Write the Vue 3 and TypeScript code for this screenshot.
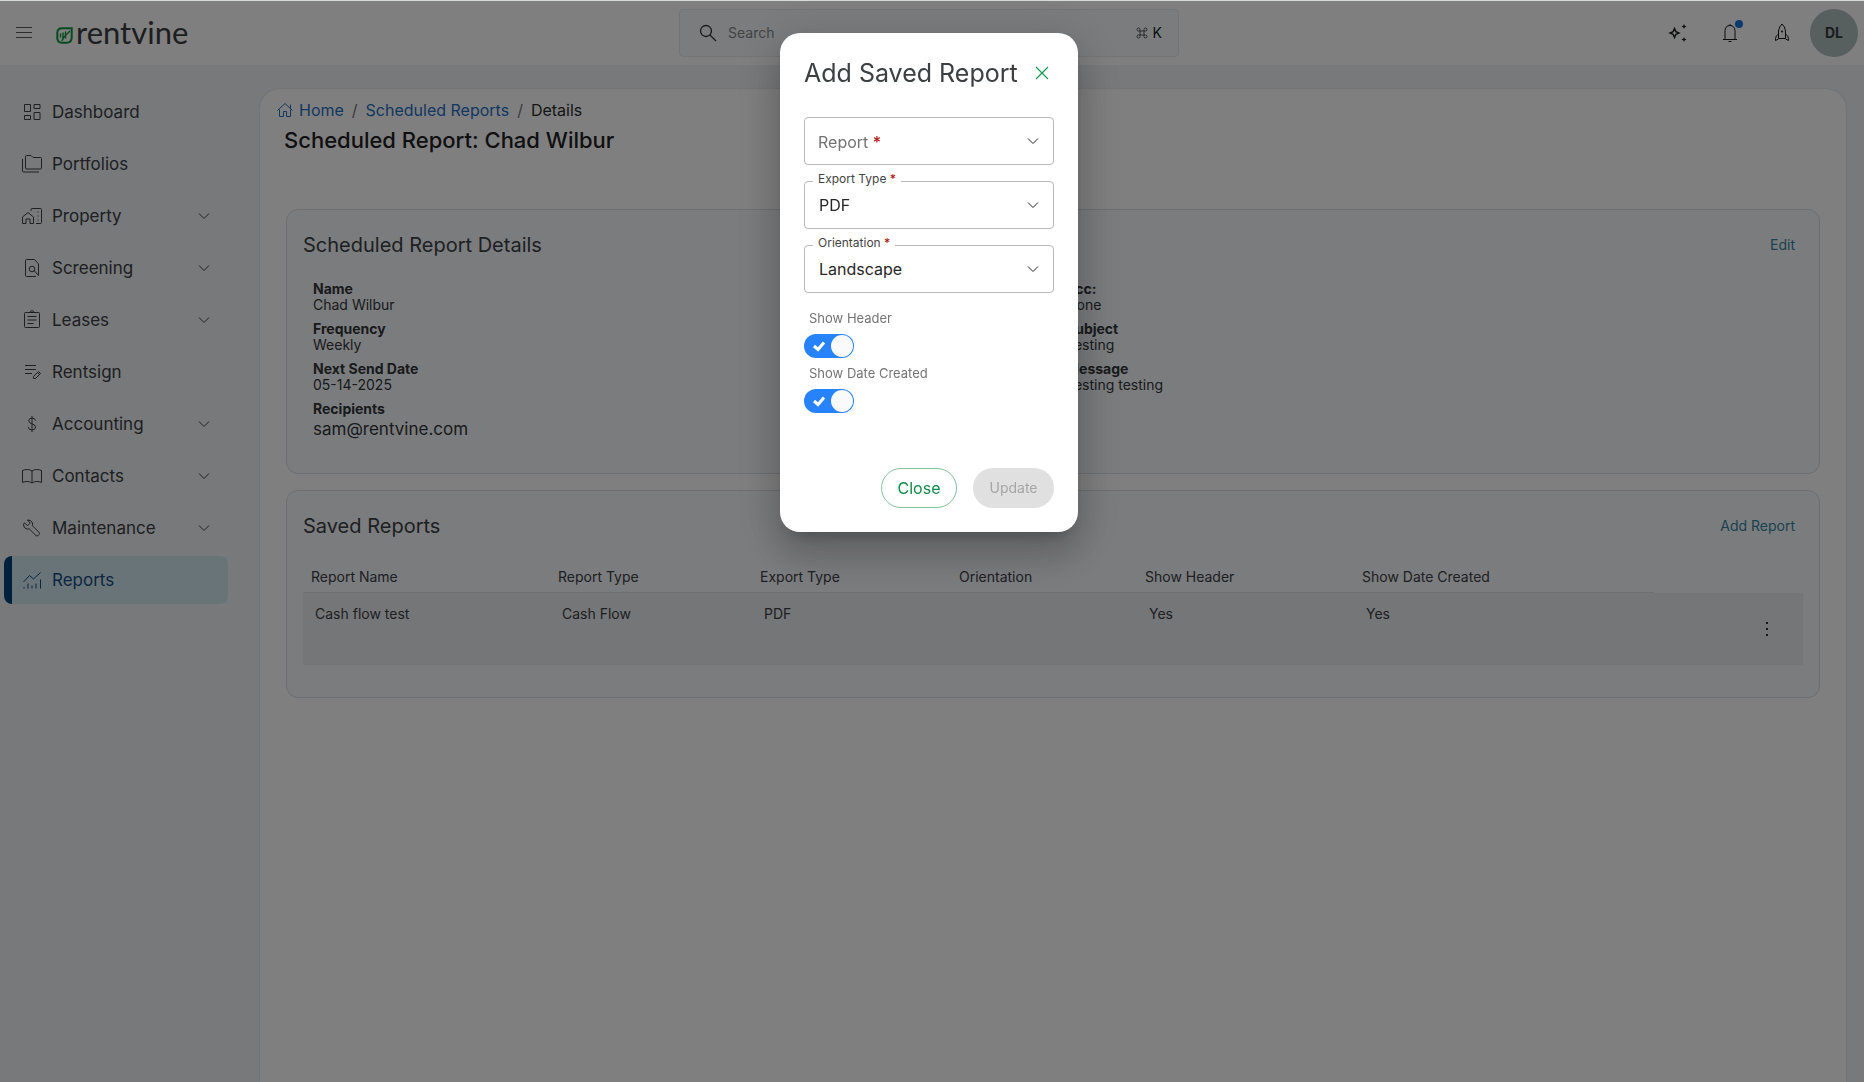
<script setup lang="ts">
import { ref } from 'vue'

interface NavItem {
  label: string
  icon: string
  expandable?: boolean
  active?: boolean
}

const nav: NavItem[] = [
  { label: 'Dashboard', icon: 'M4.5 4.5h6v7h-6zM14 4.5h6v4h-6zM4.5 15.5h6v4h-6zM14 12.5h6v7h-6z' },
  { label: 'Portfolios', icon: 'M5.5 4.5q0-1 1-1h4.5l2 2h7.500q1 0 1 1v9.500q0 1-1 1h-14q-1 0-1-1zM2.500 7v12q0 1 1 1H19' },
  { label: 'Property', expandable: true, icon: 'M2.500 19.500v-6.500l5.500-4.500 5.500 4.500v6.500h-3.500v-4.500h-4v4.500zM11 7V5.500q0-1 1-1h8.500q1 0 1 1v13q0 1-1 1H16M17.500 8h1M17.500 12h1M17.500 16h1' },
  { label: 'Screening', expandable: true, icon: 'M16 20.500H6.500q-1 0-1-1v-15q0-1 1-1h8l4 4.500v11.500L14 14.500M14.800 13a2.800 2.800 0 1 1-5.600 0a2.800 2.800 0 1 1 5.600 0' },
  { label: 'Leases', expandable: true, icon: 'M5.500 4.500h13q1 0 1 1v13q0 1-1 1h-13q-1 0-1-1v-13q0-1 1-1zM10 4.500q0-1.800 2-1.800t2 1.800M7.500 8.500h9M7.500 12h9M7.500 15.500h6' },
  { label: 'Rentsign', icon: 'M5 5.500h11M5 9.500h11M5 13.500h7M13.500 18.500v-2l5-5 2 2-5 5zM17.500 12.500l2 2' },
  { label: 'Accounting', expandable: true, icon: 'M12 4v16M15.500 8.500q-.5-2.500-3.500-2.500t-3.300 2.700q0 2.300 3.300 3.100t3.600 3.300q0 2.900-3.600 2.900t-3.700-2.900' },
  { label: 'Contacts', expandable: true, icon: 'M12 7q-2-1.500-4.800-1.500t-4.700 1v12q1.900-1 4.700-1t4.800 1.500q2-1.500 4.800-1.500t4.700 1v-12q-1.900-1-4.700-1t-4.800 1.500zv12' },
  { label: 'Maintenance', expandable: true, icon: 'M3.500 8.500q0 3 2.500 4.200q1.500.6 3.200.1l6.600 6.600q1.100 1.100 2.300.1l1-1q1-1.100-.1-2.200l-6.600-6.600q.5-1.700-.2-3.400q-1.500-2.600-4.900-2.300l3 3-2.700 2.700-3.200-2.900z' },
  { label: 'Reports', active: true, icon: 'M3.500 14l6-6.500 4 3.500 7-6.500M4 20.500v-1.500M8 20.500v-5M12 20.500v-3M16 20.500v-5M20.500 20.500v-9' },
]

const leftDetails = [
  { name: 'Name', value: 'Chad Wilbur' },
  { name: 'Frequency', value: 'Weekly' },
  { name: 'Next Send Date', value: '05-14-2025' },
]
const rightDetails = [
  { name: 'Bcc:', value: 'None' },
  { name: 'Subject', value: 'Testing' },
  { name: 'Message', value: 'Testing testing' },
]

const columns = ['Report Name', 'Report Type', 'Export Type', 'Orientation', 'Show Header', 'Show Date Created']
const rows = [['Cash flow test', 'Cash Flow', 'PDF', '', 'Yes', 'Yes']]

const search = ref('')
const report = ref('')
const exportType = ref('PDF')
const orientation = ref('Landscape')
const showHeader = ref(true)
const showDate = ref(true)
const open = ref(true)
</script>

<template>
  <div class="app">
    <header class="topbar">
      <div class="brand">
        <button class="menu" aria-label="Toggle menu">
          <svg width="16" height="14" viewBox="0 0 16 14"><path d="M0 1.500h16M0 6.500h16M0 11.500h16" /></svg>
        </button>
        <a class="logo" href="#">
          <svg width="17" height="17" viewBox="0 0 17 17">
            <path d="M6 1.300h9.700v9.200q0 5.200-5.200 5.200H6q-4.700 0-4.700-4.700V6q0-4.700 4.700-4.700z" fill="none" stroke="#09973f" stroke-width="2" />
            <path d="M4.500 6.500v4M7 5.500v7M9.500 4.500v7M6 14q.5-3 4-6l4-4" fill="none" stroke="#09973f" stroke-width="1.400" />
          </svg>
          <span>rentvine</span>
        </a>
      </div>
      <label class="search">
        <svg width="18" height="18" viewBox="0 0 18 18"><circle cx="7" cy="7" r="5.500" /><path d="M11 11l6 6" /></svg>
        <input v-model="search" type="text" placeholder="Search" aria-label="Search">
        <svg class="cmd" width="12" height="12" viewBox="0 0 12 12"><path d="M4 4h4v4H4zM4 4H2.500A1.500 1.500 0 1 1 4 2.500zM8 4V2.500A1.500 1.500 0 1 1 9.500 4zM8 8h1.500A1.500 1.500 0 1 1 8 9.500zM4 8v1.500A1.500 1.500 0 1 1 2.500 8z" /></svg>
        <kbd>K</kbd>
      </label>
      <div class="tools">
        <button aria-label="Assistant">
          <svg width="20" height="20" viewBox="0 0 20 20">
            <path d="M6.500 5.500l1.400 3.100 3.100 1.400-3.100 1.400-1.400 3.100-1.400-3.100L2 10l3.100-1.400z" stroke-width="1.400" />
            <path class="solid" d="M16 1l.8 1.700 1.700.8-1.700.8L16 6l-.8-1.700-1.700-.8 1.700-.8zM16 14l.8 1.700 1.700.8-1.700.8L16 19l-.8-1.700-1.700-.8 1.700-.8z" />
          </svg>
        </button>
        <button class="bell" aria-label="Notifications">
          <svg width="20" height="20" viewBox="0 0 20 20"><path d="M3 16.500h14M5 16.500V7.500q.5-5 5-5t5 5v9M10 2.500V1M8.500 18.500h3" /></svg>
          <span class="dot"></span>
        </button>
        <button aria-label="What's new">
          <svg width="20" height="20" viewBox="0 0 20 20"><path d="M6.500 15.500V8q.5-4.500 3.500-7 3 2.500 3.500 7v7.500zM6.500 11q-3 2-3 4.500v2l3-1.500M13.500 11q3 2 3 4.500v2l-3-1.500" /><circle class="solid" cx="10" cy="8.500" r="1" /></svg>
        </button>
        <button class="avatar" aria-label="Account">DL</button>
      </div>
    </header>

    <div class="body">
      <nav class="sidebar">
        <a v-for="item in nav" :key="item.label" href="#" :class="{ active: item.active }">
          <svg class="icon" width="24" height="24" viewBox="0 0 24 24"><path :d="item.icon" /></svg>
          <span>{{ item.label }}</span>
          <svg v-if="item.expandable" class="chevron" width="12" height="8" viewBox="0 0 12 8"><path d="M1 1.500l5 5 5-5" /></svg>
        </a>
      </nav>

      <main>
        <div class="crumbs">
          <a href="#">
            <svg width="16" height="16" viewBox="0 0 16 16"><path d="M.5 8.500L8 1.500l7.500 7M13.500 7V2.500M2.500 7.500v7h4v-5h3v5h4v-7" /></svg>
            Home
          </a>
          <i>/</i>
          <a href="#">Scheduled Reports</a>
          <i>/</i>
          <span>Details</span>
        </div>
        <h1>Scheduled Report: Chad Wilbur</h1>

        <section class="card details">
          <div class="card-head">
            <h2>Scheduled Report Details</h2>
            <button>Edit</button>
          </div>
          <div class="columns">
            <dl>
              <div v-for="d in leftDetails" :key="d.name"><dt>{{ d.name }}</dt><dd>{{ d.value }}</dd></div>
              <div><dt>Recipients</dt><dd class="mail">sam@rentvine.com</dd></div>
            </dl>
            <dl>
              <div v-for="d in rightDetails" :key="d.name"><dt>{{ d.name }}</dt><dd>{{ d.value }}</dd></div>
            </dl>
          </div>
        </section>

        <section class="card saved">
          <div class="card-head">
            <h2>Saved Reports</h2>
            <button>Add Report</button>
          </div>
          <table>
            <colgroup><col class="c1"><col class="c2"><col class="c3"><col class="c4"><col class="c5"><col class="c6"><col></colgroup>
            <thead>
              <tr><th v-for="c in columns" :key="c" scope="col">{{ c }}</th><td></td></tr>
            </thead>
            <tbody>
              <tr v-for="(r, i) in rows" :key="i">
                <td v-for="(cell, j) in r" :key="j">{{ cell }}</td>
                <td class="actions">
                  <button aria-label="Row actions"><svg width="4" height="16" viewBox="0 0 4 16"><path d="M1 1h2v2H1zM1 7h2v2H1zM1 13h2v2H1z" /></svg></button>
                </td>
              </tr>
            </tbody>
          </table>
        </section>
      </main>
    </div>

    <div v-if="open" class="overlay">
      <form class="modal" role="dialog" aria-labelledby="dialog-title" @submit.prevent>
        <div class="modal-head">
          <h2 id="dialog-title">Add Saved Report</h2>
          <button type="button" class="x" aria-label="Close dialog" @click="open = false">
            <svg width="14" height="14" viewBox="0 0 14 14"><path d="M1 1l12 12M13 1L1 13" /></svg>
          </button>
        </div>

        <div class="field">
          <select id="report" v-model="report" required><option value=""></option></select>
          <label for="report">Report <b>*</b></label>
          <svg class="chevron" width="12" height="8" viewBox="0 0 12 8"><path d="M1 1.500l5 5 5-5" /></svg>
        </div>
        <div class="field floated">
          <select id="export-type" v-model="exportType"><option>PDF</option></select>
          <label for="export-type">Export Type <b>*</b></label>
          <svg class="chevron" width="12" height="8" viewBox="0 0 12 8"><path d="M1 1.500l5 5 5-5" /></svg>
        </div>
        <div class="field floated">
          <select id="orientation" v-model="orientation"><option>Landscape</option></select>
          <label for="orientation">Orientation <b>*</b></label>
          <svg class="chevron" width="12" height="8" viewBox="0 0 12 8"><path d="M1 1.500l5 5 5-5" /></svg>
        </div>

        <div class="toggles">
          <label for="show-header">Show Header</label>
          <div class="switch">
            <input id="show-header" v-model="showHeader" type="checkbox">
            <svg width="14" height="12" viewBox="0 0 14 12"><path d="M2 6l4 3.500L12 2.500" /></svg>
          </div>
          <label for="show-date">Show Date Created</label>
          <div class="switch">
            <input id="show-date" v-model="showDate" type="checkbox">
            <svg width="14" height="12" viewBox="0 0 14 12"><path d="M2 6l4 3.500L12 2.500" /></svg>
          </div>
        </div>

        <div class="buttons">
          <button type="button" class="close" @click="open = false">Close</button>
          <button type="submit" class="update" disabled>Update</button>
        </div>
      </form>
    </div>
  </div>
</template>

<style>
body { background: #eff2f6; }
</style>

<style scoped>
* { box-sizing: border-box; }
.app {
  min-height: 100vh;
  display: flex;
  flex-direction: column;
  border-top: 1px solid #d6dbd9;
  background: #eff2f6;
  color: #3c4043;
  font: 16px/24px Inter, "Open Sans", sans-serif;
}
button { border: 0; padding: 0; background: none; font: inherit; color: inherit; cursor: pointer; }
a { color: inherit; text-decoration: none; }
h1, h2, dl, dd { margin: 0; }
svg { flex: none; fill: none; stroke: currentColor; stroke-width: 1; }
.solid { fill: currentColor; stroke: none; }

.topbar {
  display: grid;
  grid-template-columns: 1fr 500px 1fr;
  align-items: center;
  height: 64px;
  padding-right: 6px;
  background: #fff;
}
.brand { display: flex; align-items: center; gap: 24px; padding-left: 16px; }
.menu { display: flex; color: #55595d; }
.logo { display: flex; align-items: center; gap: 3px; font: 31px/32px Lato, sans-serif; color: #393c3e; }
.logo svg { margin-top: 4px; }
.logo span { margin-bottom: 2px; }
.search {
  display: flex;
  align-items: center;
  height: 48px;
  padding: 0 16px 0 19px;
  border: 1px solid #e7e9eb;
  border-radius: 4px;
  background: #f6f8fb;
}
.search svg { stroke-width: 1.300; color: #2f3337; }
.search input {
  flex: 1;
  min-width: 0;
  margin-left: 11px;
  border: 0;
  padding: 0;
  background: none;
  font: 14px/20px Inter, sans-serif;
  outline: none;
}
.search input::placeholder { color: #85888c; opacity: 1; }
.search .cmd { stroke-width: 1; color: #55595d; }
.search kbd { margin-left: 5px; font: 14px/20px Inter, sans-serif; color: #202326; }
.tools { display: flex; justify-content: flex-end; gap: 4px; }
.tools button { position: relative; display: grid; place-items: center; width: 48px; height: 48px; color: #17191b; }
.dot { position: absolute; top: 11px; right: 11px; width: 8px; height: 8px; border-radius: 50%; background: #1275dc; }
.tools .avatar { border-radius: 50%; background: #b0bfbe; color: #34393b; font-size: 14px; font-weight: 700; }

.body { flex: 1; display: flex; }
.sidebar { flex: none; width: 260px; display: flex; flex-direction: column; gap: 4px; padding: 23px 32px 0 4px; font-size: 17px; }
.sidebar a {
  display: flex;
  align-items: center;
  gap: 8px;
  height: 48px;
  padding: 0 18px 0 8px;
  border-left: 8px solid transparent;
  border-radius: 8px;
}
.sidebar span { flex: 1; }
.sidebar .active { border-color: #04427c; background: #d2e8f3; color: #164c82; }

main {
  flex: 1;
  min-width: 0;
  margin: 24px 18px 0 0;
  padding: 9px 26px 0;
  border-radius: 20px 20px 0 0;
  background: #fff;
  box-shadow: 0 0 2px rgba(0, 0, 0, .15);
}
.crumbs { display: flex; align-items: center; gap: 8px; margin-left: -9px; color: #2a2d30; }
.crumbs a { display: flex; align-items: center; gap: 6px; color: #1f70c4; }
.crumbs i { color: #74787c; font-style: normal; }
h1 { margin: 2px 0 53px -2px; font-size: 22px; line-height: 32px; font-weight: 500; color: #1f2123; }
.card { border: 1px solid #d8dde2; border-radius: 12px; background: #f7f9fc; }
.card-head { display: flex; justify-content: space-between; align-items: center; }
.card h2 { font-size: 20px; line-height: 28px; font-weight: 400; }
.card-head button { font-size: 14px; color: #35849f; }
.details { padding: 21px 24px 32px 16px; }
.columns { display: grid; grid-template-columns: 1fr 1fr; column-gap: 16px; padding: 22px 0 0 10px; }
dl { display: flex; flex-direction: column; gap: 8px; font-size: 14px; line-height: 16px; color: #323538; }
.columns dl + dl { padding-left: 4px; }
dt { font-weight: 700; }
dd.mail { font-size: 17px; line-height: 24px; }
.saved { margin-top: 16px; padding: 21px 16px 32px; }
.saved .card-head { padding-right: 8px; }

table { width: 100%; margin-top: 27px; border-collapse: collapse; table-layout: fixed; font-size: 14px; line-height: 20px; }
th, td { padding: 0; text-align: left; font-weight: 400; }
th { padding: 0 8px 5px; border-bottom: 1px solid #dcdfe3; }
tbody tr { height: 72px; background: #ebedf0; vertical-align: top; }
tbody td { padding: 11px 12px; }
.c1 { width: 247px; }
.c2 { width: 202px; }
.c3 { width: 199px; }
.c4 { width: 186px; }
.c5 { width: 217px; }
.c6 { width: 300px; }
tbody .actions { padding: 5px 34px 0; text-align: right; vertical-align: middle; }
.actions button { display: inline-flex; }
.actions svg { fill: #2c2f32; stroke: none; }

.overlay {
  position: fixed;
  inset: 1px 0 0;
  display: flex;
  justify-content: center;
  align-items: flex-start;
  padding: 32px 6px 32px 0;
  background: rgba(0, 0, 0, .5);
}
.modal {
  width: 298px;
  padding: 24px;
  border-radius: 20px;
  background: #fff;
  box-shadow: 0 11px 15px -7px rgba(0, 0, 0, .2), 0 24px 38px 3px rgba(0, 0, 0, .14), 0 9px 46px 8px rgba(0, 0, 0, .12);
  display: flex;
  flex-direction: column;
  gap: 16px;
}
.modal-head { display: flex; justify-content: space-between; align-items: center; height: 32px; margin-bottom: 12px; padding-right: 5px; }
.modal-head h2 { font-size: 25px; font-weight: 400; white-space: nowrap; }
.x { display: flex; color: #159a50; }
.x svg { stroke-width: 1.200; }
.field { position: relative; }
select {
  display: block;
  width: 100%;
  height: 48px;
  padding: 0 40px 0 14px;
  border: 1px solid #b8b8b8;
  border-radius: 4px;
  background: #fff;
  color: #262626;
  font: inherit;
  appearance: none;
}
.field .chevron { position: absolute; top: 20px; right: 15px; pointer-events: none; color: #222; }
.field label { position: absolute; left: 14px; top: 13px; color: #737373; pointer-events: none; }
.field b { color: #b3120f; font-weight: 500; }
.floated label { left: 9px; top: -10px; padding: 0 5px; background: #fff; color: #444; font-size: 12px; line-height: 16px; }
.toggles { display: flex; flex-direction: column; }
.toggles label { padding-left: 5px; margin-bottom: 6px; font: 13px/19px Inter, sans-serif; color: #747474; }
.switch + label { margin-top: 6px; }
.switch { position: relative; width: 50px; height: 24px; }
.switch input { appearance: none; display: block; width: 50px; height: 24px; margin: 0; padding: 1px; border-radius: 12px; background: #2783fb; cursor: pointer; }
.switch input::before { content: ""; display: block; width: 22px; height: 22px; border-radius: 50%; background: #fafafa; }
.switch input:checked::before { margin-left: auto; }
.switch input:not(:checked) { background: #bbb; }
.switch svg { position: absolute; left: 8px; top: 6px; color: #fff; stroke-width: 3; pointer-events: none; }
.buttons { display: flex; justify-content: flex-end; gap: 16px; margin-top: 39px; }
.buttons button { height: 40px; border-radius: 20px; }
.close { width: 76px; border: 1px solid #7fc39b; color: #118a47; }
.update { width: 81px; background: #e0e0e0; color: #a6a6a6; }
.buttons .update { font-size: 14px; }
</style>
